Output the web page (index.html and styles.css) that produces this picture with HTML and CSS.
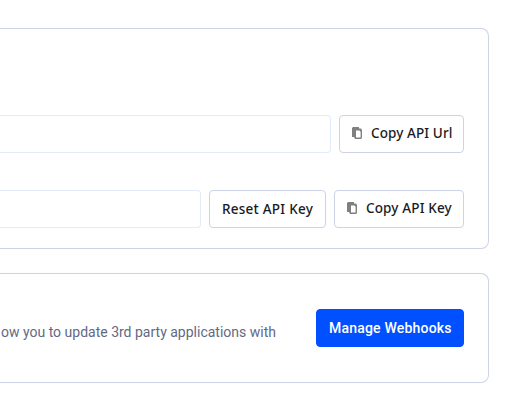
FILE: index.html
```html
<!DOCTYPE html>
<html lang="en">
<head>
<meta charset="utf-8">
<title>API settings</title>
<link rel="stylesheet" href="styles.css">
</head>
<body>
<main class="page">
  <section class="card card-api">
    <div class="row">
      <div class="field"></div>
      <button class="btn btn-url"><svg class="icon" viewBox="0 0 10 12"><path fill="#808080" fill-rule="evenodd" d="M0 1L1 0H7V1.6H9L10 3V11L9 12H3L2 10H0ZM4 3.5V10.6H8.6V4.8L7.4 3.5Z"/></svg><span>Copy API Url</span></button>
    </div>
    <div class="row">
      <div class="field"></div>
      <button class="btn btn-reset"><span>Reset API Key</span></button>
      <button class="btn btn-key"><svg class="icon" viewBox="0 0 10 12"><path fill="#808080" fill-rule="evenodd" d="M0 1L1 0H7V1.6H9L10 3V11L9 12H3L2 10H0ZM4 3.5V10.6H8.6V4.8L7.4 3.5Z"/></svg><span>Copy API Key</span></button>
    </div>
  </section>
  <section class="card card-hooks">
    <p class="description">ow you to update 3rd party applications with</p>
    <button class="btn btn-primary"><span>Manage Webhooks</span></button>
  </section>
</main>
</body>
</html>
```
FILE: styles.css
```css
* { box-sizing: border-box; }
body {
  margin: 0;
  background: #fff;
  font-family: "Noto Sans", sans-serif;
  font-size: 14px;
  overflow: hidden;
}
.page {
  display: flex;
  flex-direction: column;
  gap: 24px;
  padding: 28px 21px 0 0;
}
.card {
  border: 1px solid #cdd3e4;
  border-left: 0;
  border-radius: 0 8px 8px 0;
}
.card-api {
  height: 221px;
  padding: 86px 24px 0 0;
  display: flex;
  flex-direction: column;
  gap: 37px;
}
.row { display: flex; gap: 8px; }
.field {
  flex: 1;
  height: 38px;
  border: 1px solid #e1ebfa;
  border-left: 0;
  border-radius: 0 4px 4px 0;
}
.btn {
  display: flex;
  align-items: center;
  flex: none;
  height: 38px;
  padding: 0 0 1px 12px;
  border: 1px solid #cdd3e4;
  border-radius: 4px;
  background: #fff;
  color: #191b23;
  font: 500 13.5px/20px "Noto Sans", sans-serif;
  white-space: nowrap;
}
.icon { width: 10px; height: 12px; margin: -1px 9px 0 0; flex: none; }
.btn-url { width: 125px; letter-spacing: 0.1px; }
.btn-reset { width: 117px; padding-bottom: 0; letter-spacing: 0.25px; }
.btn-key { width: 130px; letter-spacing: 0.15px; }
.btn-url span, .btn-key span { margin-top: -1px; }
.card-hooks {
  height: 110px;
  padding: 35px 24px 0 1px;
  display: flex;
  justify-content: space-between;
  align-items: flex-start;
}
.description {
  margin: 13px 0 0;
  color: #626984;
  font: 400 14px/20px Roboto, sans-serif;
  letter-spacing: 0;
  white-space: nowrap;
}
.btn-primary {
  width: 148px;
  padding-bottom: 0;
  border-color: #0050ff;
  background: #0050ff;
  color: #fff;
  font: 500 14px/20px Roboto, sans-serif;
  letter-spacing: 0.2px;
}
```
